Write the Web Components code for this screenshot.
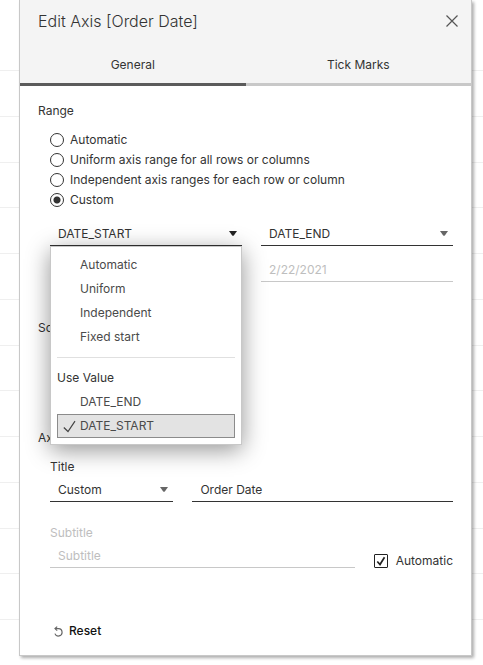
<!DOCTYPE html>
<html lang="en">
<head>
<meta charset="utf-8">
<meta name="viewport" content="width=device-width, initial-scale=1">
<title>Edit Axis [Order Date]</title>
<style>
html, body { margin: 0; min-height: 100%; background: #fff; }
body { font-family: Inter, "Open Sans", "Liberation Sans", sans-serif; font-size: 12px; line-height: 20px; color: #333; }
</style>
</head>
<body>
<sheet-grid>
  <axis-dialog heading="Edit Axis [Order Date]">
    <dialog-section heading="Range">
      <radio-list name="range" value="Custom" options="Automatic|Uniform axis range for all rows or columns|Independent axis ranges for each row or column|Custom"></radio-list>
      <field-row>
        <field-stack>
          <drop-down label="Range start" value="DATE_START" active>
            <option-menu></option-menu>
          </drop-down>
          <text-field label="Start date" disabled></text-field>
        </field-stack>
        <field-stack>
          <drop-down label="Range end" value="DATE_END"></drop-down>
          <text-field label="End date" value="2/22/2021" disabled></text-field>
        </field-stack>
      </field-row>
    </dialog-section>
    <dialog-section heading="Scale" size="tall"></dialog-section>
    <dialog-section heading="Axis Titles" size="tight">
      <title-fields></title-fields>
    </dialog-section>
    <reset-button></reset-button>
  </axis-dialog>
</sheet-grid>
<script>
const define = (name, html, setup) => customElements.define(name, class extends HTMLElement {
  connectedCallback() {
    if (this.shadowRoot) return;
    const root = this.attachShadow({ mode: "open" });
    const t = document.createElement("template");
    t.innerHTML = "<style>*{box-sizing:border-box}button,input,select{font:inherit;color:inherit;margin:0}</style>" + html;
    root.append(t.content.cloneNode(true));
    if (setup) setup(this, root);
  }
});

define("sheet-grid", `<style>
:host { display: grid; min-height: 100vh; }
.lines, ::slotted(*) { grid-area: 1 / 1; }
.lines { display: grid; grid-auto-rows: 1fr; padding: 71px 0 45px; border: 0; }
.lines i { border-bottom: 1px solid #efefef; }
.first { grid-area: 1 / 1; height: 71px; border-bottom: 1px solid #efefef; }
</style><div class="first"></div><div class="lines"></div><slot></slot>`, (el, root) => {
  const lines = root.querySelector(".lines");
  for (let i = 0; i < 12; i++) lines.append(document.createElement("i"));
});

define("axis-dialog", `<style>
:host { display: flex; flex-direction: column; margin: 0 11px 9px 19px; background: #fff; border: solid #c8c8c8; border-width: 0 1px 1px; box-shadow: 2px 2px 3px rgba(0,0,0,.32); z-index: 1; }
header { background: #f4f4f4; }
.bar { display: flex; justify-content: space-between; align-items: center; padding: 9px 12px 0 18px; }
h1 { margin: 0; font-size: 16px; line-height: 24px; font-weight: 300; }
.close { width: 14px; height: 14px; padding: 0; border: 0; background: none; display: grid; place-items: center; }
nav { display: grid; grid-template-columns: 1fr 1fr; padding-top: 14px; }
nav button { padding: 8px 0 8px; height: 39px; border: 0; border-bottom: 3px solid #c8c8c8; background: none; line-height: 20px; }
nav button[aria-selected=true] { border-color: #5b5b5b; }
main { display: flex; flex-direction: column; padding: 15px 18px 12px; }
</style>
<header><div class="bar"><h1></h1><button class="close" aria-label="Close"><svg width="12" height="12" viewBox="0 0 12 12" fill="none" stroke="#555" stroke-width="1.2"><path d="M.5 .5l11 11M11.500 .5l-11 11"/></svg></button></div>
<nav role="tablist"><button role="tab" aria-selected="true">General</button><button role="tab" aria-selected="false">Tick Marks</button></nav></header>
<main><slot></slot></main>`, (el, root) => { root.querySelector("h1").textContent = el.getAttribute("heading"); });

define("dialog-section", `<style>
:host { display: block; padding-bottom: 36px; }
:host([size=tall]) { padding-bottom: 90px; }
:host([size=tight]) { padding-bottom: 53px; }
h2 { margin: 0; font-size: 12px; line-height: 20px; font-weight: 400; }
.body { padding: 0 0 0 12px; }
</style><h2></h2><div class="body"><slot></slot></div>`, (el, root) => { root.querySelector("h2").textContent = el.getAttribute("heading"); });

define("radio-list", `<style>
:host { display: flex; flex-direction: column; padding: 9px 0 12px; }
label { display: flex; align-items: center; gap: 6px; height: 20px; }
input { appearance: none; width: 14px; height: 14px; border: 1px solid #333; border-radius: 50%; background: #fff; }
input:checked { background: radial-gradient(circle, #333 3px, #fff 4px); }
</style>`, (el, root) => {
  for (const text of el.getAttribute("options").split("|")) {
    const label = document.createElement("label"), input = document.createElement("input");
    input.type = "radio"; input.name = el.getAttribute("name"); input.checked = text === el.getAttribute("value");
    label.append(input, text);
    root.append(label);
  }
});

define("field-row", `<style>
:host { display: grid; grid-template-columns: 1fr 1fr; gap: 19px; }
</style><slot></slot>`);
define("field-stack", `<style>
:host { display: flex; flex-direction: column; gap: 12px; min-width: 0; }
</style><slot></slot>`);

define("drop-down", `<style>
:host { display: block; position: relative; min-width: 0; }
.box { display: flex; align-items: center; border-bottom: 1px solid #333; height: 24px; }
select { flex: 1; width: 100%; height: 23px; padding: 0 24px 0 8px; border: 0; outline: 0; background: none; appearance: none; line-height: 23px; }
svg { flex: none; margin: 0 5px 0 -14px; fill: #666; pointer-events: none; }
:host([active]) svg { fill: #222; }
</style><div class="box"><select><option></option></select><svg width="8" height="5" viewBox="0 0 8 5"><path d="M0 0h8L5 4.300Q4 5.300 3 4.300z"/></svg></div><slot></slot>`, (el, root) => {
  root.querySelector("select").setAttribute("aria-label", el.getAttribute("label"));
  root.querySelector("option").textContent = el.getAttribute("value");
});

define("option-menu", `<style>
:host { position: absolute; top: 100%; left: 0; right: 0; z-index: 5; padding: 6px; background: #fff; border: 1px solid #c8c8c8; box-shadow: 0 5px 22px rgba(0,0,0,.42); color: #4a4a4a; }
[role=listbox] { display: flex; flex-direction: column; }
button { display: flex; align-items: center; height: 24px; padding: 0 5px; border: 1px solid transparent; background: none; text-align: left; }
button::before { content: ""; width: 17px; }
button[aria-selected=true] { background: #e3e3e3; border-color: #8b8b8b; }
button[aria-selected=true]::before { display: none; }
svg { width: 13px; height: 13px; margin-right: 4px; fill: none; stroke: #444; stroke-width: 1.2; }
hr { width: 100%; margin: 8px 0; border: 0; border-top: 1px solid #e0e0e0; }
.group { line-height: 24px; color: #333; }
</style><div role="listbox" aria-label="Range start">
<button role="option">Automatic</button><button role="option">Uniform</button><button role="option">Independent</button><button role="option">Fixed start</button>
<hr><div class="group">Use Value</div>
<button role="option">DATE_END</button><button role="option" aria-selected="true"><svg viewBox="0 0 13 13"><path d="M.8 7.500l4.200 4L12 1.200"/></svg>DATE_START</button></div>`);

define("text-field", `<style>
:host { display: block; min-width: 0; }
input { display: block; width: 100%; height: 24px; padding: 0 8px; border: 0; border-bottom: 1px solid #333; border-radius: 0; outline: 0; background: none; }
input:disabled, input::placeholder { color: #bebebe; opacity: 1; }
input:disabled { border-color: #c8c8c8; }
</style><input type="text">`, (el, root) => {
  const input = root.querySelector("input");
  input.setAttribute("aria-label", el.getAttribute("label"));
  input.value = el.getAttribute("value") || "";
  input.placeholder = el.getAttribute("placeholder") || "";
  input.disabled = el.hasAttribute("disabled");
});

define("title-fields", `<style>
:host { display: flex; flex-direction: column; padding-top: 9px; }
.label { line-height: 20px; padding-bottom: 1px; }
.muted { color: #bebebe; margin-top: 21px; }
.row { display: flex; gap: 19px; align-items: flex-end; }
.title { display: grid; grid-template-columns: 9fr 19fr; }
text-field { flex: 1; }
.check { display: flex; align-items: center; gap: 8px; height: 14px; }
.tick { display: grid; }
.tick > * { grid-area: 1 / 1; }
.tick input { appearance: none; width: 14px; height: 14px; border: 1px solid #222; border-radius: 1px; background: #fff; }
svg { pointer-events: none; fill: none; stroke: #222; stroke-width: 1.700; }
</style>
<div class="label">Title</div>
<div class="row title"><drop-down label="Title" value="Custom"></drop-down><text-field label="Title text" value="Order Date"></text-field></div>
<div class="label muted">Subtitle</div>
<div class="row"><text-field label="Subtitle" placeholder="Subtitle" disabled></text-field>
<label class="check"><span class="tick"><input type="checkbox" checked><svg width="14" height="14" viewBox="0 0 14 14"><path d="M3.300 7.500l2.700 3L10.500 3.300"/></svg></span>Automatic</label></div>`);

define("reset-button", `<style>
:host { display: block; padding-left: 16px; }
button { display: flex; align-items: center; gap: 6px; padding: 0; border: 0; background: none; line-height: 20px; color: #111; font-weight: 500; }
svg { fill: none; stroke: #666; stroke-width: 1.200; }
</style><button><svg width="9" height="11" viewBox="0 0 9 11"><path d="M1 2.600h3.600a3.700 3.700 0 1 1-3.700 5"/><path d="M3.200 .6L1 2.600l2.200 2"/></svg>Reset</button>`);
</script>
</body>
</html>
